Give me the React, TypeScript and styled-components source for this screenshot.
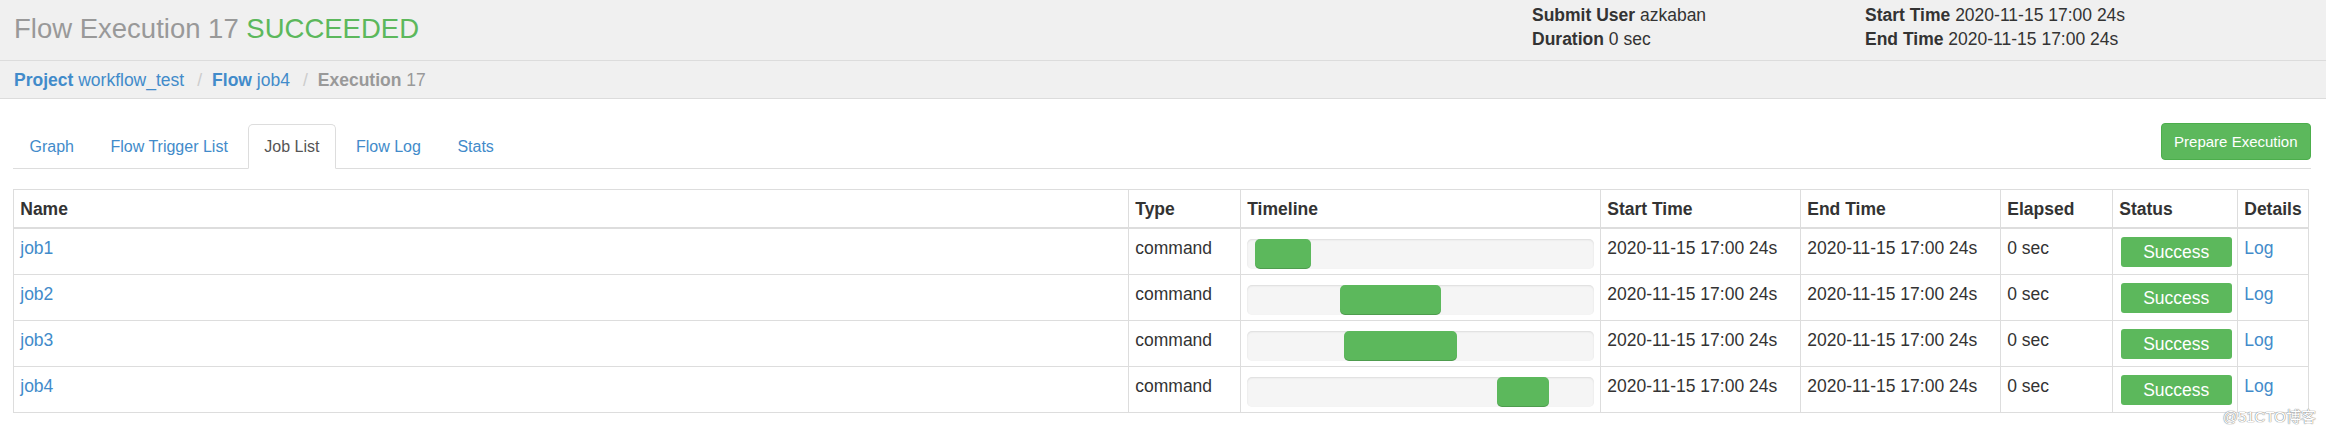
import React from 'react'
import styled, { createGlobalStyle } from 'styled-components'

const GlobalStyle = createGlobalStyle`
    html, body {
        margin: 0;
        padding: 0;
        background: #fff;
    }
    body {
        font-family: "Liberation Sans", Arial, "Noto Sans CJK SC", sans-serif;
        font-size: 17.5px;
        color: #333;
    }
    * {
        box-sizing: border-box;
    }
`

interface Job {
    name: string
    left: number
    width: number
}

const jobs: Job[] = [
    { name: 'job1', left: 2.1, width: 16.2 },
    { name: 'job2', left: 26.7, width: 29.2 },
    { name: 'job3', left: 27.9, width: 32.7 },
    { name: 'job4', left: 72.2, width: 14.9 },
]

const TIME = '2020-11-15 17:00 24s'

const App = () => {
    return (
        <Page>
            <GlobalStyle />
            <PageHeader>
                <Title>
                    Flow Execution 17 <TitleStatus>SUCCEEDED</TitleStatus>
                </Title>
                <InfoGrid>
                    <InfoItem><b>Submit User</b> azkaban</InfoItem>
                    <InfoItem><b>Start Time</b> {TIME}</InfoItem>
                    <InfoItem><b>Duration</b> 0 sec</InfoItem>
                    <InfoItem><b>End Time</b> {TIME}</InfoItem>
                </InfoGrid>
            </PageHeader>

            <Breadcrumb>
                <Crumb $first>
                    <CrumbLink href="#"><b>Project</b> workflow_test</CrumbLink>
                </Crumb>
                <Crumb>
                    <CrumbLink href="#"><b>Flow</b> job4</CrumbLink>
                </Crumb>
                <Crumb>
                    <Current><b>Execution</b> 17</Current>
                </Crumb>
            </Breadcrumb>

            <Content>
                <NavRow>
                    <TabList>
                        <Tab>Graph</Tab>
                        <Tab>Flow Trigger List</Tab>
                        <Tab $active>Job List</Tab>
                        <Tab>Flow Log</Tab>
                        <Tab>Stats</Tab>
                    </TabList>
                    <PrepareButton>Prepare Execution</PrepareButton>
                </NavRow>

                <JobTable>
                    <thead>
                        <tr>
                            <HeadCell>Name</HeadCell>
                            <HeadCell $w={112}>Type</HeadCell>
                            <HeadCell $w={360}>Timeline</HeadCell>
                            <HeadCell $w={200}>Start Time</HeadCell>
                            <HeadCell $w={200}>End Time</HeadCell>
                            <HeadCell $w={112}>Elapsed</HeadCell>
                            <HeadCell $w={125}>Status</HeadCell>
                            <HeadCell $w={71}>Details</HeadCell>
                        </tr>
                    </thead>
                    <tbody>
                        {jobs.map(job => (
                            <tr key={job.name}>
                                <Cell><TableLink href="#">{job.name}</TableLink></Cell>
                                <Cell>command</Cell>
                                <Cell>
                                    <TimelineBar>
                                        <TimelineFill style={{ marginLeft: `${job.left}%`, width: `${job.width}%` }} />
                                    </TimelineBar>
                                </Cell>
                                <Cell>{TIME}</Cell>
                                <Cell>{TIME}</Cell>
                                <Cell>0 sec</Cell>
                                <Cell><StatusBadge>Success</StatusBadge></Cell>
                                <Cell><TableLink href="#">Log</TableLink></Cell>
                            </tr>
                        ))}
                    </tbody>
                </JobTable>
            </Content>

            <Watermark>@51CTO博客</Watermark>
        </Page>
    )
}

const Page = styled.div`
    position: relative;
    min-height: 437px;
`

const PageHeader = styled.div`
    display: flex;
    align-items: flex-start;
    height: 61px;
    padding: 0 15px 0 14px;
    background: #f0f0f0;
    border-bottom: 1px solid #dcdcdc;
`

const Title = styled.h1`
    margin: 0;
    padding-top: 13.5px;
    font-size: 27.5px;
    font-weight: normal;
    line-height: 30px;
    color: #999;
    white-space: nowrap;
`

const TitleStatus = styled.span`
    color: #5cb85c;
`

const InfoGrid = styled.div`
    margin-left: auto;
    display: grid;
    grid-template-columns: 333px 446px;
    padding-top: 3px;
    line-height: 24px;
`

const InfoItem = styled.div`
    white-space: nowrap;
    color: #333;
`

const Breadcrumb = styled.ol`
    display: flex;
    margin: 0;
    list-style: none;
    padding: 6.5px 14px 5.5px;
    line-height: 25px;
    background: #f0f0f0;
    border-bottom: 1px solid #dcdcdc;
`

const Crumb = styled.li<{ $first?: boolean }>`
    white-space: nowrap;

    &::before {
        content: ${p => (p.$first ? 'none' : '"/"')};
        padding: 0 10px 0 13px;
        color: #ccc;
    }
`

const CrumbLink = styled.a`
    color: #428bca;
    text-decoration: none;
`

const Current = styled.span`
    color: #999;
`

const Content = styled.div`
    padding: 25px 15px 0 13px;
`

const NavRow = styled.div`
    display: flex;
    align-items: flex-end;
    border-bottom: 1px solid #ddd;
`

const TabList = styled.ul`
    display: flex;
    margin: 0 0 -1px;
    padding: 0;
    list-style: none;
`

const Tab = styled.li<{ $active?: boolean }>`
    margin-right: 3.5px;
    padding: 11.5px 15.5px;
    font-size: 16px;
    line-height: 20px;
    white-space: nowrap;
    border: 1px solid ${p => (p.$active ? '#ddd' : 'transparent')};
    border-bottom-color: ${p => (p.$active ? '#fff' : 'transparent')};
    border-radius: 5px 5px 0 0;
    background: ${p => (p.$active ? '#fff' : 'transparent')};
    color: ${p => (p.$active ? '#555' : '#428bca')};
`

const PrepareButton = styled.button`
    align-self: flex-start;
    margin: -1px 0 0 auto;
    height: 37px;
    padding: 0 12.5px;
    font-family: inherit;
    font-size: 15px;
    color: #fff;
    background: #5cb85c;
    border: 1px solid #4cae4c;
    border-radius: 4px;
`

const JobTable = styled.table`
    width: calc(100% - 2px);
    margin-top: 20px;
    table-layout: fixed;
    border-collapse: collapse;
    border: 1px solid #ddd;
    line-height: 22px;
`

const HeadCell = styled.th<{ $w?: number }>`
    width: ${p => (p.$w ? `${p.$w}px` : 'auto')};
    padding: 7.5px 6.25px 7.5px;
    text-align: left;
    font-weight: bold;
    color: #333;
    border: 1px solid #ddd;
    border-bottom: 2.5px solid #ddd;
    white-space: nowrap;
`

const Cell = styled.td`
    padding: 8px 6.25px 4px;
    vertical-align: top;
    border: 1px solid #ddd;
    white-space: nowrap;
    color: #333;
`

const TableLink = styled.a`
    color: #428bca;
    text-decoration: none;
`

const TimelineBar = styled.div`
    display: flex;
    height: 29.5px;
    margin-top: 2px;
    background: #f5f5f5;
    border-radius: 5px;
    box-shadow: inset 0 1px 2px rgba(0, 0, 0, 0.1);
    overflow: hidden;
`

const TimelineFill = styled.div`
    height: 100%;
    background: #5cb85c;
    border-radius: 5px;
    box-shadow: inset 0 -1px 0 rgba(0, 0, 0, 0.15);
`

const StatusBadge = styled.div`
    width: 111px;
    height: 30px;
    margin: 0 0 3px 1.5px;
    line-height: 30px;
    text-align: center;
    color: #fff;
    background: #5cb85c;
    border-radius: 3px;
`

const Watermark = styled.div`
    position: absolute;
    top: 407px;
    right: 10px;
    font-size: 15px;
    line-height: 20px;
    color: #fff;
    text-shadow: 0 0 1px #777, 0 0 1px #777;
    font-family: "Liberation Sans", "Noto Sans CJK SC", sans-serif;
`

export default App
